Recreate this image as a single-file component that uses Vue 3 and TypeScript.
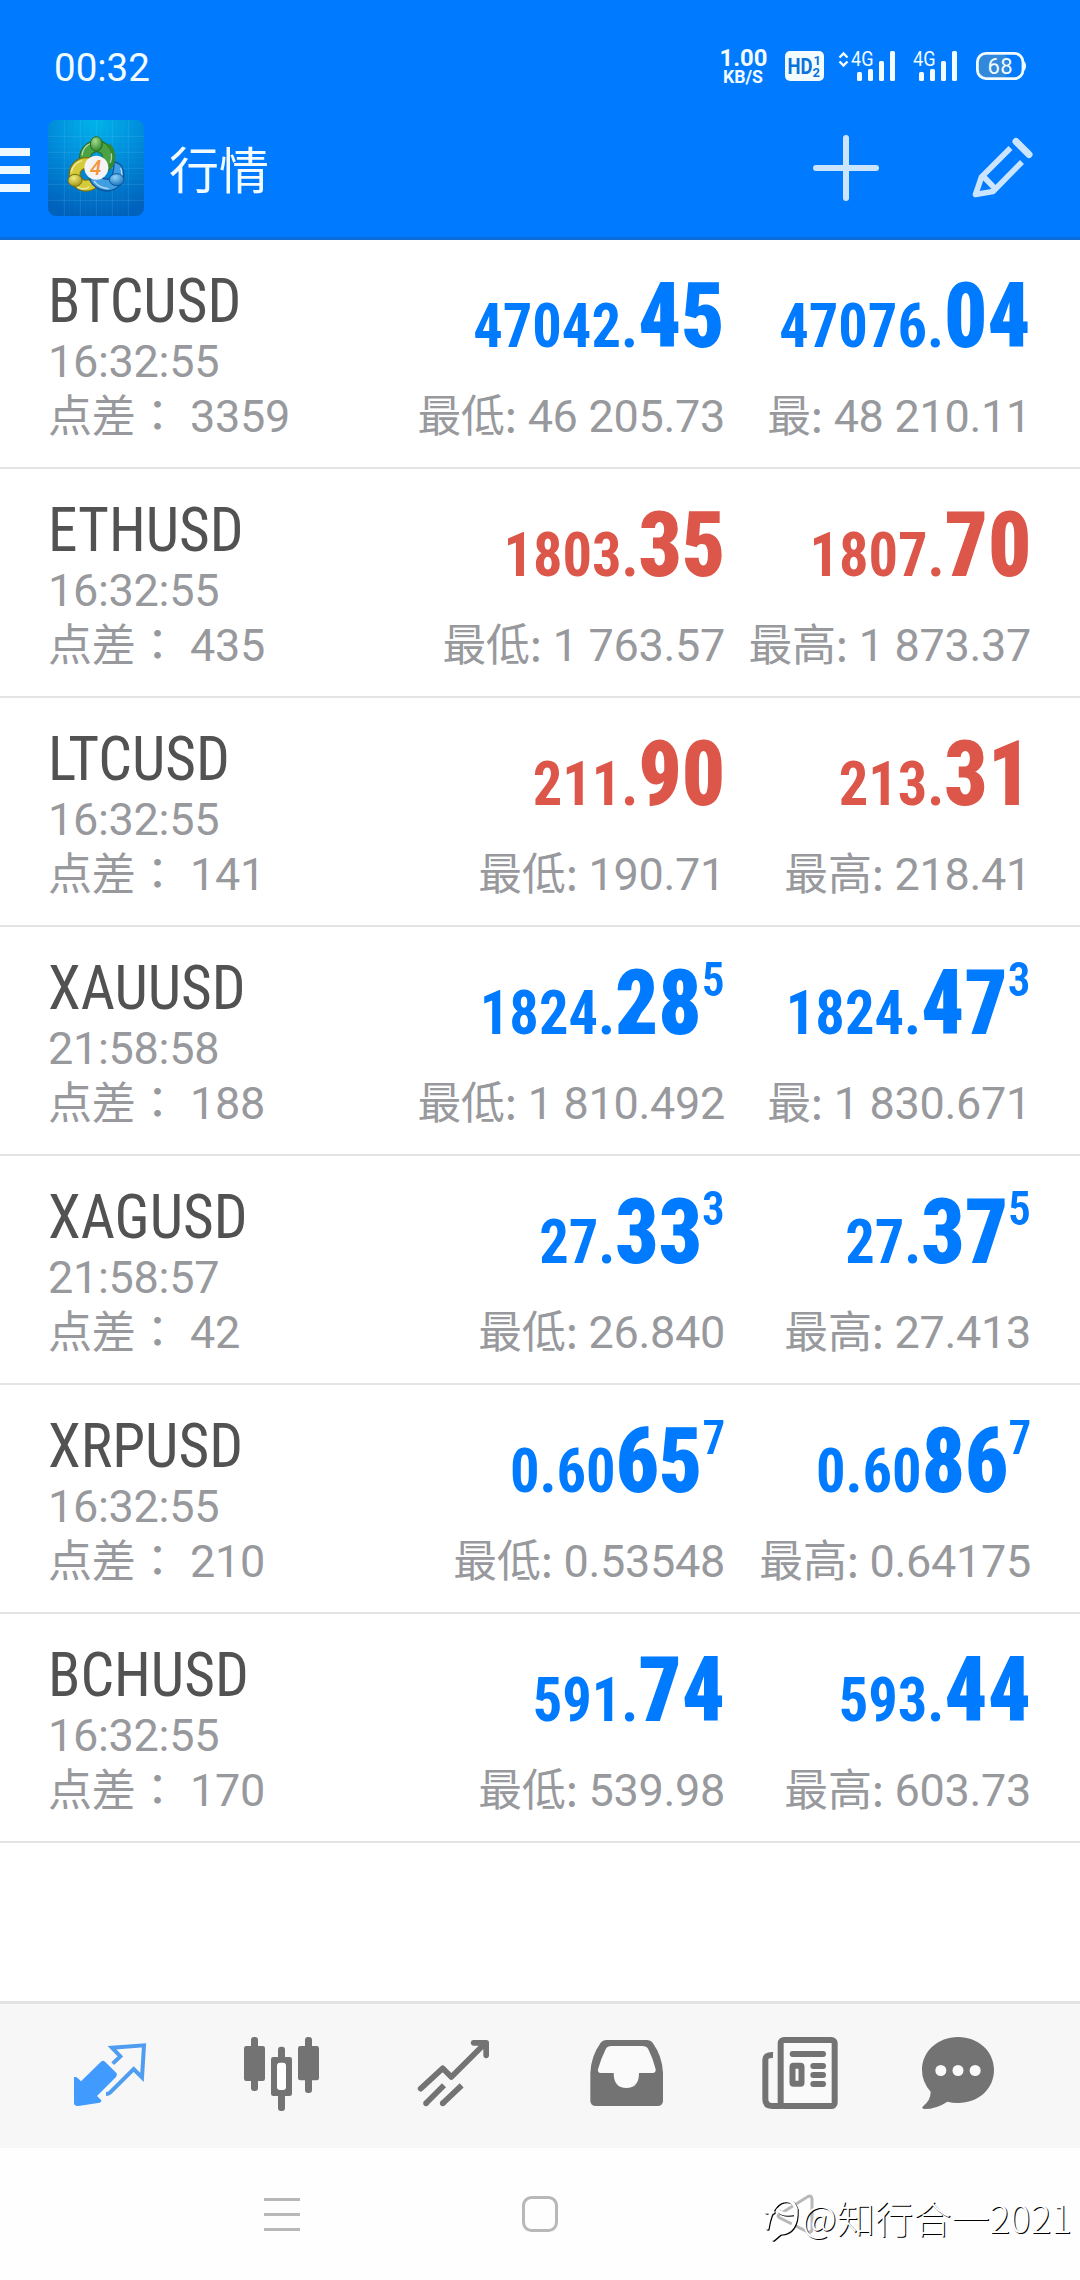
<script setup lang="ts">
interface Price {
  lead: string
  big: string
  sup?: string
}

interface Quote {
  symbol: string
  time: string
  spread: string
  bid: Price
  ask: Price
  low: string
  high: string
  highLabel: string
  down?: boolean
}

const quotes: Quote[] = [
  { symbol: 'BTCUSD', time: '16:32:55', spread: '3359', bid: { lead: '47042.', big: '45' }, ask: { lead: '47076.', big: '04' }, low: '46 205.73', high: '48 210.11', highLabel: '最:' },
  { symbol: 'ETHUSD', time: '16:32:55', spread: '435', bid: { lead: '1803.', big: '35' }, ask: { lead: '1807.', big: '70' }, low: '1 763.57', high: '1 873.37', highLabel: '最高:', down: true },
  { symbol: 'LTCUSD', time: '16:32:55', spread: '141', bid: { lead: '211.', big: '90' }, ask: { lead: '213.', big: '31' }, low: '190.71', high: '218.41', highLabel: '最高:', down: true },
  { symbol: 'XAUUSD', time: '21:58:58', spread: '188', bid: { lead: '1824.', big: '28', sup: '5' }, ask: { lead: '1824.', big: '47', sup: '3' }, low: '1 810.492', high: '1 830.671', highLabel: '最:' },
  { symbol: 'XAGUSD', time: '21:58:57', spread: '42', bid: { lead: '27.', big: '33', sup: '3' }, ask: { lead: '27.', big: '37', sup: '5' }, low: '26.840', high: '27.413', highLabel: '最高:' },
  { symbol: 'XRPUSD', time: '16:32:55', spread: '210', bid: { lead: '0.60', big: '65', sup: '7' }, ask: { lead: '0.60', big: '86', sup: '7' }, low: '0.53548', high: '0.64175', highLabel: '最高:' },
  { symbol: 'BCHUSD', time: '16:32:55', spread: '170', bid: { lead: '591.', big: '74' }, ask: { lead: '593.', big: '44' }, low: '539.98', high: '603.73', highLabel: '最高:' },
]
</script>

<template>
  <div class="screen">
    <header class="header">
      <div class="status">
        <span class="clock">00:32</span>
        <svg class="status-icons" viewBox="700 30 380 70" width="380" height="70">
          <g fill="#f2fcff" font-family="Roboto, sans-serif">
            <text x="743.5" y="66" font-size="24" font-weight="700" text-anchor="middle" textLength="48" lengthAdjust="spacingAndGlyphs">1.00</text>
            <text x="743" y="83" font-size="17.5" font-weight="700" text-anchor="middle" textLength="40" lengthAdjust="spacingAndGlyphs">KB/S</text>
            <rect x="785" y="51" width="39" height="30" rx="5" />
            <g fill="#0a72d8" font-weight="700">
              <text x="787.5" y="74" font-size="22.5" textLength="25" lengthAdjust="spacingAndGlyphs">HD</text>
              <text x="813.5" y="64.5" font-size="13">1</text>
              <text x="812.5" y="76.5" font-size="13">2</text>
            </g>
            <path d="M839.5 57.5L843.5 53.5L847.5 57.5M839.5 61.5L843.5 65.5L847.5 61.5" fill="none" stroke="#f2fcff" stroke-width="2.4" />
            <text x="851" y="65.5" font-size="20" textLength="22.5" lengthAdjust="spacingAndGlyphs">4G</text>
            <rect x="857" y="72" width="5" height="9" rx="1.5" />
            <rect x="868" y="69" width="5" height="12" rx="1.5" />
            <rect x="879" y="61" width="5" height="20" rx="1.5" />
            <rect x="890" y="51" width="5" height="30" rx="1.5" />
            <text x="913" y="65.5" font-size="20" textLength="22.5" lengthAdjust="spacingAndGlyphs">4G</text>
            <rect x="919" y="72" width="5" height="9" rx="1.5" />
            <rect x="930" y="69" width="5" height="12" rx="1.5" />
            <rect x="941" y="61" width="5" height="20" rx="1.5" />
            <rect x="952" y="51" width="5" height="30" rx="1.5" />
            <rect x="979" y="55" width="29" height="22" rx="5" fill="#3289dc" />
            <rect x="977.4" y="53.4" width="45.6" height="25.2" rx="8.5" fill="none" stroke="#f2fcff" stroke-width="2.8" />
            <path d="M1023.5 61q2.5 1 2.5 5t-2.5 5z" />
            <text x="1000" y="73.5" font-size="22" text-anchor="middle" textLength="25">68</text>
          </g>
        </svg>
      </div>
      <div class="toolbar">
        <div class="burger"><i /><i /><i /></div>
        <svg class="logo" viewBox="144 60 288 288" width="96" height="96">
          <defs>
            <radialGradient id="bg" cx="0.5" cy="0" r="1">
              <stop offset="0" stop-color="#00b4ea" />
              <stop offset="0.45" stop-color="#008fdc" />
              <stop offset="1" stop-color="#0062bc" />
            </radialGradient>
            <radialGradient id="green" cx="0.4" cy="0.3" r="0.8">
              <stop offset="0" stop-color="#a5dc8c" />
              <stop offset="1" stop-color="#1f7a22" />
            </radialGradient>
            <radialGradient id="gold" cx="0.4" cy="0.3" r="0.8">
              <stop offset="0" stop-color="#f3ee7c" />
              <stop offset="1" stop-color="#9c8b10" />
            </radialGradient>
            <radialGradient id="blue" cx="0.4" cy="0.3" r="0.8">
              <stop offset="0" stop-color="#8fd4fb" />
              <stop offset="1" stop-color="#0f67b4" />
            </radialGradient>
          </defs>
          <rect x="144" y="60" width="288" height="288" rx="24" fill="url(#bg)" />
          <path d="M193 60V348M241 60V348M289 60V348M337 60V348M385 60V348M144 109H432M144 157H432M144 205H432M144 253H432M144 301H432" stroke="#7fd0ff" stroke-opacity="0.2" stroke-width="2.5" />
          <path d="M209 60V348M225 60V348M257 60V348M273 60V348M305 60V348M321 60V348M353 60V348M369 60V348M144 125H432M144 141H432M144 173H432M144 189H432M144 221H432M144 237H432" stroke="#7fd0ff" stroke-opacity="0.08" stroke-width="2" />
          <circle cx="290" cy="174" r="35" fill="none" stroke="#276d20" stroke-width="36" />
          <circle cx="290" cy="174" r="35" fill="none" stroke="#4ba244" stroke-width="29" />
          <circle cx="258" cy="223" r="34" fill="none" stroke="#75700f" stroke-width="36" />
          <circle cx="258" cy="223" r="34" fill="none" stroke="#d5cb38" stroke-width="29" />
          <path d="M366 201A50 50 0 0 1 322 273Q286 272 268 238L300 228Q310 238 324 238Q342 232 342 186Q358 188 366 201Z" fill="#409fe2" stroke="#0e559c" stroke-width="4" />
          <path d="M325 135A50 50 0 0 1 328 203" fill="none" stroke="#37892f" stroke-width="12" />
          <path d="M246 166a44 44 0 0 1 28-37M214 216a45 45 0 0 1 32-34M362 204q8 22-4 36M282 243q16 22 44 23M232 262q20 10 36-2M334 160q3 14-3 28" fill="none" stroke="#fff" stroke-opacity="0.6" stroke-width="4" />
          <ellipse cx="289" cy="132" rx="18" ry="22" fill="url(#green)" stroke="#276d20" stroke-width="3" />
          <ellipse cx="225" cy="241" rx="21" ry="18" fill="url(#gold)" stroke="#75700f" stroke-width="3" />
          <ellipse cx="350" cy="239" rx="22" ry="18" fill="url(#blue)" stroke="#0e559c" stroke-width="3" />
          <circle cx="289" cy="203" r="36" fill="#f4f4f6" />
          <text x="287" y="225" font-family="Roboto, sans-serif" font-size="62" font-weight="500" font-style="italic" fill="#f3953c" text-anchor="middle">4</text>
        </svg>
        <h1 class="title">行情</h1>
        <svg class="actions" viewBox="800 120 240 96" width="240" height="96" fill="none" stroke="#cbe5ff">
          <path d="M816 168H876M846 138V198" stroke-width="6" stroke-linecap="round" />
          <path d="M1010.5 148L981.5 177L975.5 194.5L993 191.5L1022 162M983 176L994.5 188" stroke-width="5.6" stroke-linejoin="round" />
          <path d="M1016 141.500L1029 154.5" stroke-width="7" stroke-linecap="round" />
        </svg>
      </div>
    </header>

    <main class="list">
      <section v-for="q in quotes" :key="q.symbol" class="row" :class="{ down: q.down }">
        <div class="info">
          <div class="symbol">{{ q.symbol }}</div>
          <div class="meta">{{ q.time }}</div>
          <div class="meta"><span class="cjk">点差：</span> {{ q.spread }}</div>
        </div>
        <div class="side">
          <div class="price">{{ q.bid.lead }}<b>{{ q.bid.big }}</b><sup v-if="q.bid.sup">{{ q.bid.sup }}</sup></div>
          <div class="meta"><span class="cjk">最低:</span> {{ q.low }}</div>
        </div>
        <div class="side">
          <div class="price">{{ q.ask.lead }}<b>{{ q.ask.big }}</b><sup v-if="q.ask.sup">{{ q.ask.sup }}</sup></div>
          <div class="meta"><span class="cjk">{{ q.highLabel }}</span> {{ q.high }}</div>
        </div>
      </section>
    </main>

    <nav class="tabs">
      <svg viewBox="72 72 516 432">
        <path d="M222 291Q229 290 232 293L243 304L303 245Q309 240 315 245L350 280Q352 286 348 291L291 348L304 361Q305 366 299 368L235 378Q223 379 222 370Z" fill="#419bff" />
        <path d="M338 251L361 229L336 203L432 196L426 292L401 267L330 338Q326 342 318 342" fill="none" stroke="#4f9df0" stroke-width="12" />
      </svg>
      <svg viewBox="588 72 516 432" fill="#737373">
        <rect x="753" y="171" width="21" height="162" rx="9" />
        <rect x="732" y="198" width="63" height="105" rx="7" />
        <rect x="834" y="200" width="21" height="60" rx="9" />
        <rect x="834" y="330" width="21" height="63" rx="9" />
        <rect x="813" y="231" width="63" height="117" rx="7" />
        <rect x="831" y="248" width="27" height="82" rx="9" fill="#fff" />
        <rect x="915" y="171" width="21" height="168" rx="9" />
        <rect x="894" y="198" width="63" height="103" rx="7" />
      </svg>
      <svg viewBox="24 72 516 432" fill="none" stroke="#737373" stroke-width="17">
        <path d="M182 326L248 265L274 291L374 191M341 188.5H378.5V226" stroke-linecap="round" stroke-linejoin="round" />
        <path d="M198 370L252 316M248 370L305 316" />
        <path d="M198 370h.1M248 370h.1" stroke-linecap="round" />
      </svg>
      <svg viewBox="540 72 516 432">
        <path d="M738 180H862Q872 180 878 188Q908 230 909 280V362Q908 378 892 378H708Q692 378 691 362V280Q692 230 722 188Q728 180 738 180Z" fill="#737373" />
        <path d="M754 198H846Q860 198 865 208Q880 238 887 268Q888 279 878 279H837Q837 324 799 324Q761 324 761 279H722Q712 279 714 268Q722 238 737 208Q742 198 754 198Z" fill="#fafafa" />
      </svg>
      <svg viewBox="-24 72 516 432" fill="none" stroke="#737373" stroke-width="18">
        <rect x="182" y="180" width="162" height="198" rx="10" fill="#fafafa" />
        <path d="M159 225Q136 224 136 240V358Q136 378 156 378H185" />
        <path d="M218 222H309M280 258H309M280 285H309M280 312H309" stroke-linecap="round" />
        <rect x="217.5" y="257.5" width="27" height="54" rx="3" />
      </svg>
      <svg viewBox="492 72 516 432">
        <path d="M714 171C775 171 822 214 822 270C822 327 775 369 714 369Q697 369 682 365Q650 387 612 387Q603 385 610 378Q632 360 632 335Q606 306 606 270C606 214 654 171 714 171Z" fill="#737373" />
        <circle cx="662.5" cy="271.5" r="16.5" fill="#fafafa" />
        <circle cx="714" cy="271.5" r="16.5" fill="#fafafa" />
        <circle cx="765.5" cy="271.5" r="16.5" fill="#fafafa" />
      </svg>
    </nav>

    <footer class="sysnav">
      <svg viewBox="0 2148 1080 132" width="1080" height="132" fill="none" stroke="#b8b8b8" stroke-width="3">
        <path d="M264 2199.5H300M264 2214.5H300M264 2229.5H300" />
        <rect x="523.5" y="2197.5" width="33" height="33" rx="8" />
        <path d="M780 2214L808 2196.5Q812 2195 812 2199.5V2229Q812 2233 808 2232L780 2218Q776 2216 780 2214Z" />
      </svg>
      <div class="watermark">
        <svg viewBox="762 2196 40 50" width="40" height="50" fill="none" stroke="#fff" stroke-width="3.5" stroke-linecap="round">
          <path d="M767 2232Q770 2212 780 2206Q792 2201 796 2213Q797 2236 780 2237L773 2243M766 2216H773M778 2214Q782 2220 796 2217" />
        </svg>
        <span>@知行合一2021</span>
      </div>
    </footer>
  </div>
</template>

<style>
body {
  background: #fff;
}
</style>

<style scoped>
.screen {
  width: 1080px;
  height: 2280px;
  display: flex;
  flex-direction: column;
  background: #fff;
  overflow: hidden;
  font-family: Roboto, 'Noto Sans CJK SC', sans-serif;
}
.header {
  height: 240px;
  box-sizing: border-box;
  background: #007aff;
  border-bottom: 3px solid #0b6cda;
}
.status {
  height: 120px;
  display: flex;
  justify-content: space-between;
}
.clock {
  padding: 45px 0 0 54px;
  font-size: 38.5px;
  line-height: 46px;
  color: #f2fcff;
}
.status-icons {
  margin-top: 30px;
}
.toolbar {
  height: 96px;
  display: flex;
  align-items: center;
}
.burger {
  width: 30px;
  margin: 0 18px 0 0;
  display: flex;
  flex-direction: column;
  gap: 10px;
  padding-top: 4px;
}
.burger i {
  height: 8px;
  background: #edf8ff;
}
.title {
  margin: 0 0 2px 25px;
  flex: 1;
  font: 400 50px/70px 'Noto Sans CJK SC', sans-serif;
  color: #f2fcff;
}
.actions {
  margin-right: 40px;
}
.row {
  height: 229px;
  box-sizing: border-box;
  border-bottom: 2px solid #e4e4e5;
  display: grid;
  grid-template-columns: 370px 307px 306px;
  padding-left: 48px;
  color: #007aff;
}
.row.down {
  color: #dc5649;
}
.info {
  padding-top: 27px;
}
.symbol {
  font-size: 62px;
  line-height: 67px;
  font-family: 'Roboto Condensed', Roboto, sans-serif;
  font-stretch: 75%;
  color: #525252;
  transform: scaleX(0.957);
  transform-origin: 0 50%;
}
.meta {
  font-size: 45px;
  line-height: 55px;
  letter-spacing: -0.3px;
  color: #98999d;
  white-space: nowrap;
}
.cjk {
  font-family: 'Noto Sans CJK TC', sans-serif;
  font-size: 44px;
  line-height: 0;
}
.side {
  display: flex;
  flex-direction: column;
  align-items: flex-end;
  padding-top: 36px;
}
.price {
  height: 113px;
  font-size: 62px;
  line-height: 100px;
  font-family: 'Roboto Condensed', Roboto, sans-serif;
  font-stretch: 75%;
  font-weight: 700;
  white-space: nowrap;
  transform: scaleX(0.943);
  transform-origin: 100% 50%;
}
.price b {
  font-size: 90px;
  line-height: 0;
}
.price sup {
  font-size: 48px;
  font-weight: 600;
  line-height: 0;
  vertical-align: 38px;
}
.tabs {
  margin-top: auto;
  height: 147px;
  box-sizing: border-box;
  border-top: 3px solid #e3e3e3;
  background: #f7f7f7;
  display: flex;
  padding-left: 24px;
}
.tabs svg {
  width: 172px;
  height: 144px;
}
.sysnav {
  position: relative;
  height: 132px;
  background: #fefefe;
}
.watermark {
  position: absolute;
  left: 762px;
  top: 44px;
  display: flex;
  align-items: flex-start;
  font: 300 38px/50px 'Noto Sans CJK SC', sans-serif;
  letter-spacing: 0.2px;
  color: #fff;
  text-shadow: 1px 1px 0 #000;
  white-space: nowrap;
}
.watermark svg {
  filter: drop-shadow(1px 1px 0 #000);
}
</style>
